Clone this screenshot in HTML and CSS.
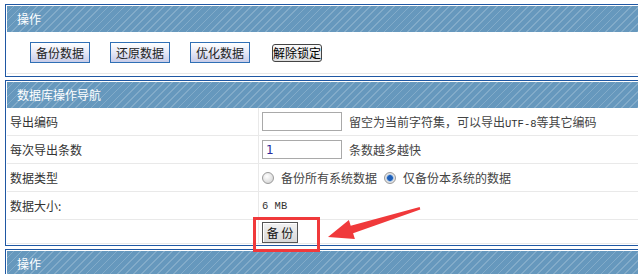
FILE: index.html
```html
<!DOCTYPE html>
<html lang="zh-CN">
<head>
    <meta charset="UTF-8">
    <title>数据库备份</title>
    <link rel="stylesheet" href="styles.css">
</head>
<body>
    <div class="page">
        <div class="box">
            <div class="box-title">操作</div>
            <div class="actions">
                <button class="btn-blue">备份数据</button>
                <button class="btn-blue">还原数据</button>
                <button class="btn-blue">优化数据</button>
                <button class="btn-plain">解除锁定</button>
            </div>
        </div>

        <div class="box">
            <div class="box-title">数据库操作导航</div>
            <div class="form-row">
                <div class="label">导出编码</div>
                <div class="value">
                    <input class="text-input" type="text" value="">
                    <span class="hint">留空为当前字符集，可以导出<span class="mono">UTF-8</span>等其它编码</span>
                </div>
            </div>
            <div class="form-row">
                <div class="label">每次导出条数</div>
                <div class="value">
                    <input class="text-input num" type="text" value="1">
                    <span class="hint">条数越多越快</span>
                </div>
            </div>
            <div class="form-row">
                <div class="label">数据类型</div>
                <div class="value">
                    <span class="radio"></span>
                    <span class="hint">备份所有系统数据</span>
                    <span class="radio checked"></span>
                    <span class="hint">仅备份本系统的数据</span>
                </div>
            </div>
            <div class="form-row">
                <div class="label">数据大小:</div>
                <div class="value"><span class="mono">6 MB</span></div>
            </div>
            <div class="form-row last">
                <div class="label"></div>
                <div class="value"><button class="btn-submit">备 份</button></div>
            </div>
        </div>

        <div class="box">
            <div class="box-title">操作</div>
        </div>
    </div>

    <!-- annotation overlay -->
    <div class="mark-box"></div>
    <svg class="mark-arrow" width="638" height="274" viewBox="0 0 638 274">
        <polygon points="328,237 348.9,220 350.7,225.7 419.7,207 420.3,209.5 353.1,233.3 354.9,239" fill="#f0393b"/>
    </svg>
</body>
</html>
```

FILE: styles.css
```css
* {
    box-sizing: border-box;
}

body {
    margin: 0;
    background: #ffffff;
    overflow: hidden;
    font-family: "Noto Sans CJK SC", "DejaVu Sans", sans-serif;
    font-size: 12px;
    color: #333333;
}

.page {
    width: 638px;
    height: 274px;
    overflow: hidden;
    padding: 4px 0 0 5px;
}

.box {
    width: 660px;
    border: 1px solid #1f57a3;
    padding: 1px;
    margin-bottom: 3px;
}

.box-title {
    height: 26px;
    line-height: 25px;
    padding-left: 10px;
    color: #ffffff;
    font-size: 12px;
    background-color: #6698bd;
    background-image: repeating-linear-gradient(135deg, #6698bd 0 4.4px, #82abc9 4.4px 5.6px);
}

.actions {
    display: flex;
    align-items: center;
    gap: 20px;
    height: 42px;
    padding-left: 23px;
    border-bottom: 1px solid #e8e8e8;
    margin-bottom: 1px;
}

.actions button {
    font-family: inherit;
    font-size: 12px;
    line-height: 1;
    cursor: pointer;
}

.btn-blue {
    width: 60px;
    height: 21px;
    padding: 0;
    color: #222222;
    border: 1px solid #2f6fb5;
    background: linear-gradient(#ffffff, #e6e8f6 50%, #c8cce8);
}

.btn-plain {
    width: 50px;
    height: 18px;
    padding: 0;
    margin-left: 2px;
    color: #000000;
    border: 1px solid #444444;
    border-radius: 3px;
    background: linear-gradient(#fafafa, #dedede);
}

.form-row {
    display: grid;
    grid-template-columns: 252px 1fr;
    height: 28px;
    border-bottom: 1px solid #e9e9e9;
}

.form-row.last {
    height: 24px;
}

.label {
    display: flex;
    align-items: center;
    padding-left: 3px;
    font-size: 12px;
    color: #333333;
    border-right: 1px solid #e9e9e9;
}

.value {
    display: flex;
    align-items: center;
    padding-left: 3px;
}

.text-input {
    width: 80px;
    height: 19px;
    margin: 0 7px 0 0;
    padding: 0 3px;
    border: 1px solid #a9a9a9;
    font-family: "DejaVu Sans", sans-serif;
    font-size: 12px;
    color: #2b2b9b;
}

.hint {
    color: #444444;
    font-size: 12px;
    white-space: nowrap;
}

.mono {
    font-family: "Liberation Mono", monospace;
    font-size: 10.5px;
    color: #333333;
}

.radio {
    display: inline-block;
    width: 12px;
    height: 12px;
    margin-right: 7px;
    border-radius: 50%;
    border: 1px solid #9a9a9a;
    background: radial-gradient(circle at 40% 35%, #ffffff, #dcdcdc 70%, #c4c4c4);
}

.radio.checked {
    margin-left: 7px;
    background: radial-gradient(circle, #1e5fb8 0 2.5px, #6fa0dc 3px, #e8e8e8 4px, #cfcfcf);
}

.btn-submit {
    width: 36px;
    height: 21px;
    padding: 0;
    margin-top: 1px;
    font-family: inherit;
    font-size: 12px;
    color: #111111;
    border: 1px solid #555555;
    box-shadow: inset 1px 1px 0 #ffffff;
    background: linear-gradient(#f2f2f2, #d8d8d8);
}

.mark-box {
    position: absolute;
    left: 253px;
    top: 217px;
    width: 67px;
    height: 35px;
    border: 3px solid #f0393b;
}

.mark-arrow {
    position: absolute;
    left: 0;
    top: 0;
}
```
